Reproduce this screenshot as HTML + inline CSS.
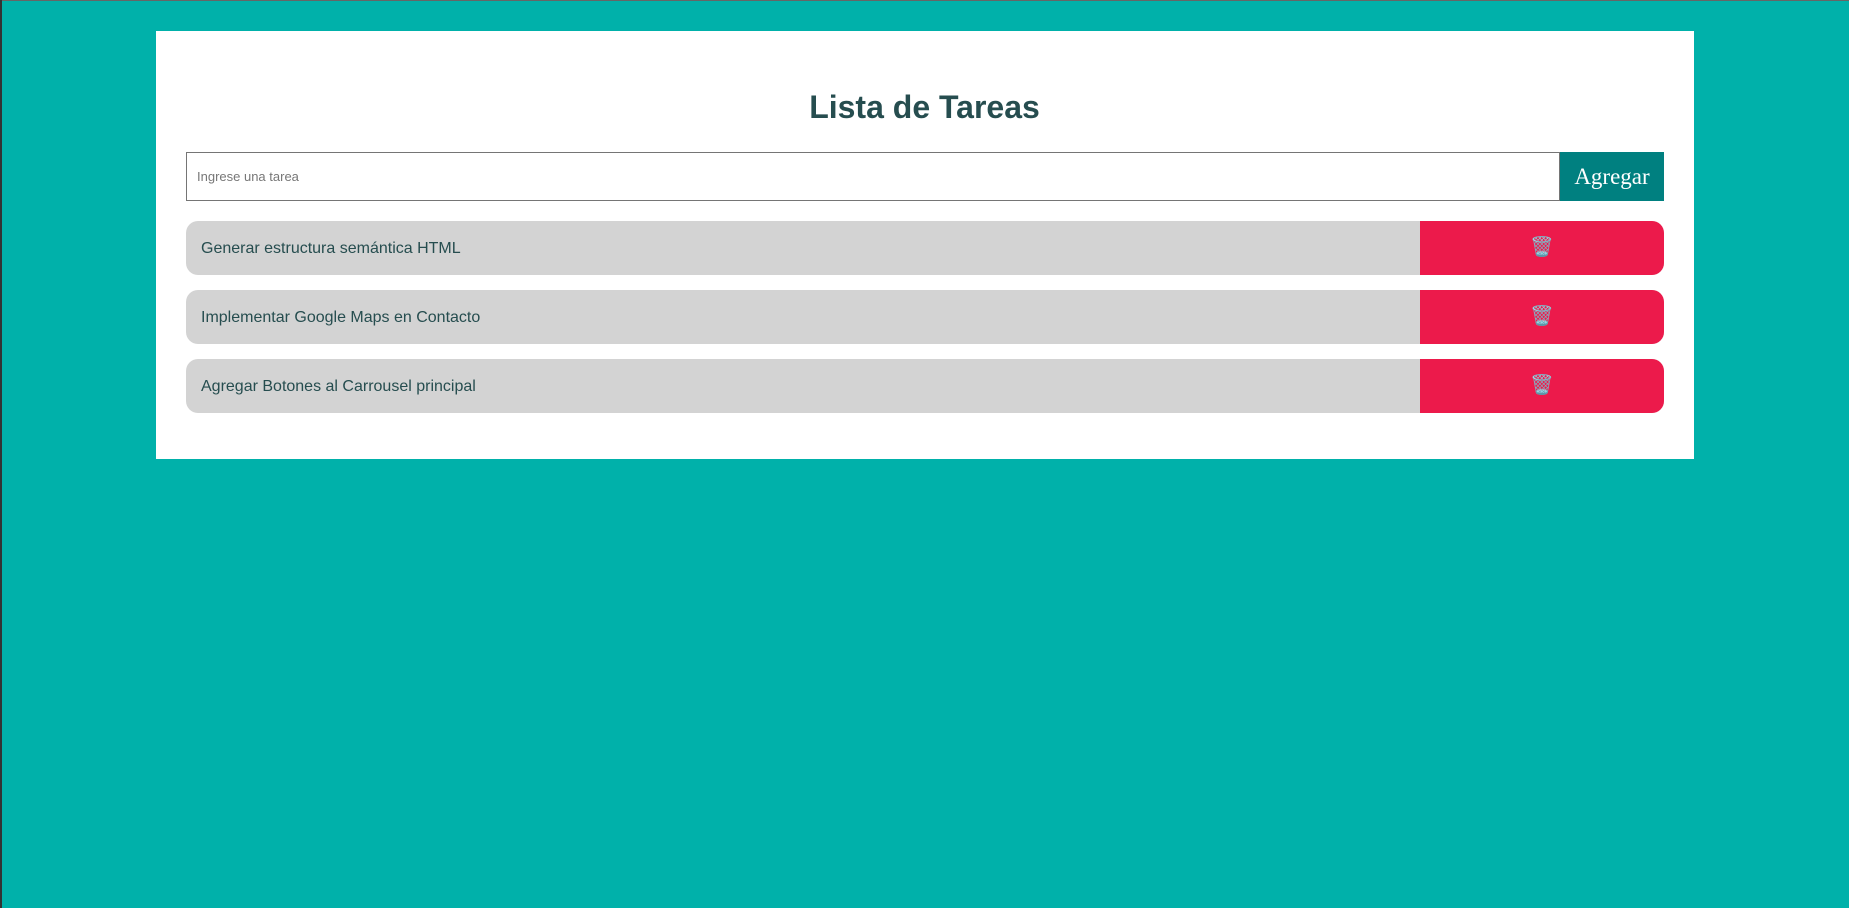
<!DOCTYPE html>
<html><head><meta charset="utf-8"><style>
html,body{margin:0;padding:0;width:1849px;height:908px;overflow:hidden}
body{background:#00b1aa;font-family:"Liberation Sans",sans-serif;position:relative}
.bt{position:absolute;left:0;top:0;width:1849px;height:1px;background:#666}
.bl{position:absolute;left:0;top:0;width:2px;height:908px;background:#333}
.card{position:absolute;left:156px;top:31px;width:1538px;height:428px;background:#fff}
h1{position:absolute;left:0;right:0;top:87px;margin:0;text-align:center;font-size:32px;line-height:40px;color:#264d4f;font-weight:bold}
.inp{position:absolute;left:186px;top:152px;width:1372px;height:47px;border:1px solid #757575;background:#fff}
.inp span{position:absolute;left:10px;top:16px;font-size:13px;color:#777}
.btn{position:absolute;left:1560px;top:152px;width:104px;height:49px;background:#008080;color:#fff;font-family:"Liberation Serif",serif;font-size:23px;text-align:center;line-height:49px}
.item{position:absolute;left:186px;width:1478px;height:54px;background:#d3d3d3;border-radius:12px;overflow:hidden}
.item span{position:absolute;left:15px;top:1px;line-height:54px;font-size:16px;color:#264d4f}
.del{position:absolute;right:0;top:0;width:244px;height:54px;background:#ec1a4b;text-align:center;line-height:54px;font-size:19px}
</style></head><body>
<div class="bt"></div><div class="bl"></div>
<div class="card"></div>
<h1>Lista de Tareas</h1>
<div class="inp"><span>Ingrese una tarea</span></div>
<div class="btn">Agregar</div>
<div class="item" style="top:221px"><span>Generar estructura semántica HTML</span><div class="del">🗑️</div></div>
<div class="item" style="top:290px"><span>Implementar Google Maps en Contacto</span><div class="del">🗑️</div></div>
<div class="item" style="top:359px"><span>Agregar Botones al Carrousel principal</span><div class="del">🗑️</div></div>
</body></html>
